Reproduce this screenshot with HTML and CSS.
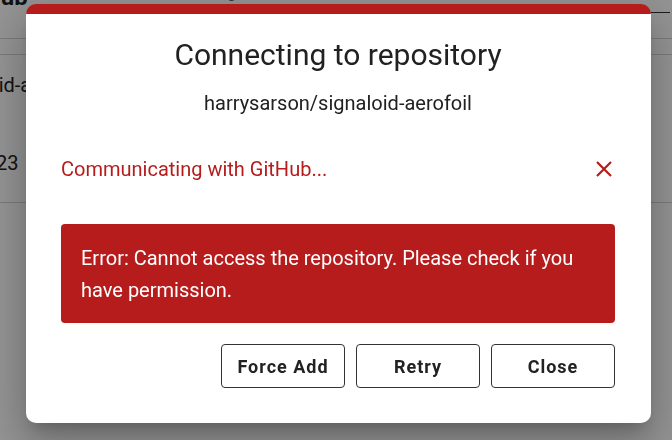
FILE: index.html
```html
<!DOCTYPE html>
<html>
<head>
<meta charset="utf-8">
<link rel="stylesheet" href="styles.css">
</head>
<body>
<div class="page">
  <div class="header">
    <span class="brand">GitHub</span>
    <span class="search">Q signaloid</span>
    <span class="underline"></span>
  </div>
  <div class="subheader"></div>
  <div class="row">
    <div class="cell-name">harrysarson/signaloid-aerofoil</div>
    <div class="cell-date">12/05/2023</div>
  </div>
</div>
<div class="overlay"></div>
<div class="dialog">
  <h1 class="title">Connecting to repository</h1>
  <div class="repo">harrysarson/signaloid-aerofoil</div>
  <div class="status">
    <span>Communicating with GitHub...</span>
    <svg class="xicon" width="18" height="18" viewBox="0 0 18 18"><path d="M2 2 L16 16 M16 2 L2 16" stroke="#b71c1c" stroke-width="2.2" fill="none"/></svg>
  </div>
  <div class="error">Error: Cannot access the repository. Please check if you have permission.</div>
  <div class="actions">
    <button class="btn">Force Add</button>
    <button class="btn">Retry</button>
    <button class="btn">Close</button>
  </div>
</div>
</body>
</html>
```
FILE: styles.css
```css
html, body {
  margin: 0;
  padding: 0;
  width: 672px;
  height: 440px;
  overflow: hidden;
  background: #fff;
  font-family: Roboto, "Liberation Sans", sans-serif;
}
.page {
  width: 672px;
}
.header {
  height: 38px;
  border-bottom: 1px solid #d4d4d4;
  position: relative;
}
.brand {
  position: absolute;
  left: -47px;
  top: -17px;
  font-size: 24px;
  font-weight: 700;
  color: #222;
}
.search {
  position: absolute;
  left: 200px;
  top: -17px;
  font-size: 16px;
  color: #555;
}
.underline {
  position: absolute;
  left: 640px;
  width: 30px;
  top: 12px;
  height: 1px;
  background: #333;
}
.subheader {
  height: 15px;
  border-bottom: 1px solid #d4d4d4;
}
.row {
  height: 147px;
  border-bottom: 1px solid #d4d4d4;
  font-size: 20px;
  color: #222;
  position: relative;
}
.cell-name {
  position: absolute;
  left: -180px;
  top: 18px;
}
.cell-date {
  position: absolute;
  left: -88px;
  top: 96px;
}
.overlay {
  position: fixed;
  inset: 0;
  background: rgba(0, 0, 0, 0.42);
}
.dialog {
  position: absolute;
  left: 26px;
  top: 4px;
  width: 625px;
  height: 419px;
  box-sizing: border-box;
  background: #fff;
  border-top: 10px solid #b71c1c;
  border-radius: 10px;
  padding: 0 36px 0 35px;
  box-shadow: 0 11px 15px -7px rgba(0,0,0,0.2), 0 24px 38px 3px rgba(0,0,0,0.14), 0 9px 46px 8px rgba(0,0,0,0.12);
  display: flex;
  flex-direction: column;
}
.title {
  margin: 23px 0 0;
  font-size: 30px;
  font-weight: 400;
  color: #212121;
  text-align: center;
  line-height: 36px;
}
.repo {
  margin-top: 18px;
  font-size: 20px;
  color: #212121;
  text-align: center;
  line-height: 24px;
}
.status {
  margin-top: 42px;
  display: flex;
  justify-content: space-between;
  align-items: center;
  font-size: 20px;
  color: #b71c1c;
  line-height: 24px;
}
.xicon {
  margin-right: 2px;
}
.error {
  margin-top: 43px;
  background: #b71c1c;
  color: #fff;
  border-radius: 4px;
  font-size: 20px;
  line-height: 32px;
  padding: 18px 20px 17px;
}
.actions {
  margin-top: 21px;
  display: flex;
  justify-content: flex-end;
  gap: 11px;
}
.btn {
  width: 124px;
  height: 44px;
  background: #fff;
  border: 1px solid #333;
  border-radius: 4px;
  font-family: Roboto, "Liberation Sans", sans-serif;
  font-size: 18px;
  font-weight: 700;
  letter-spacing: 1px;
  color: #222;
  padding: 0;
}
```
